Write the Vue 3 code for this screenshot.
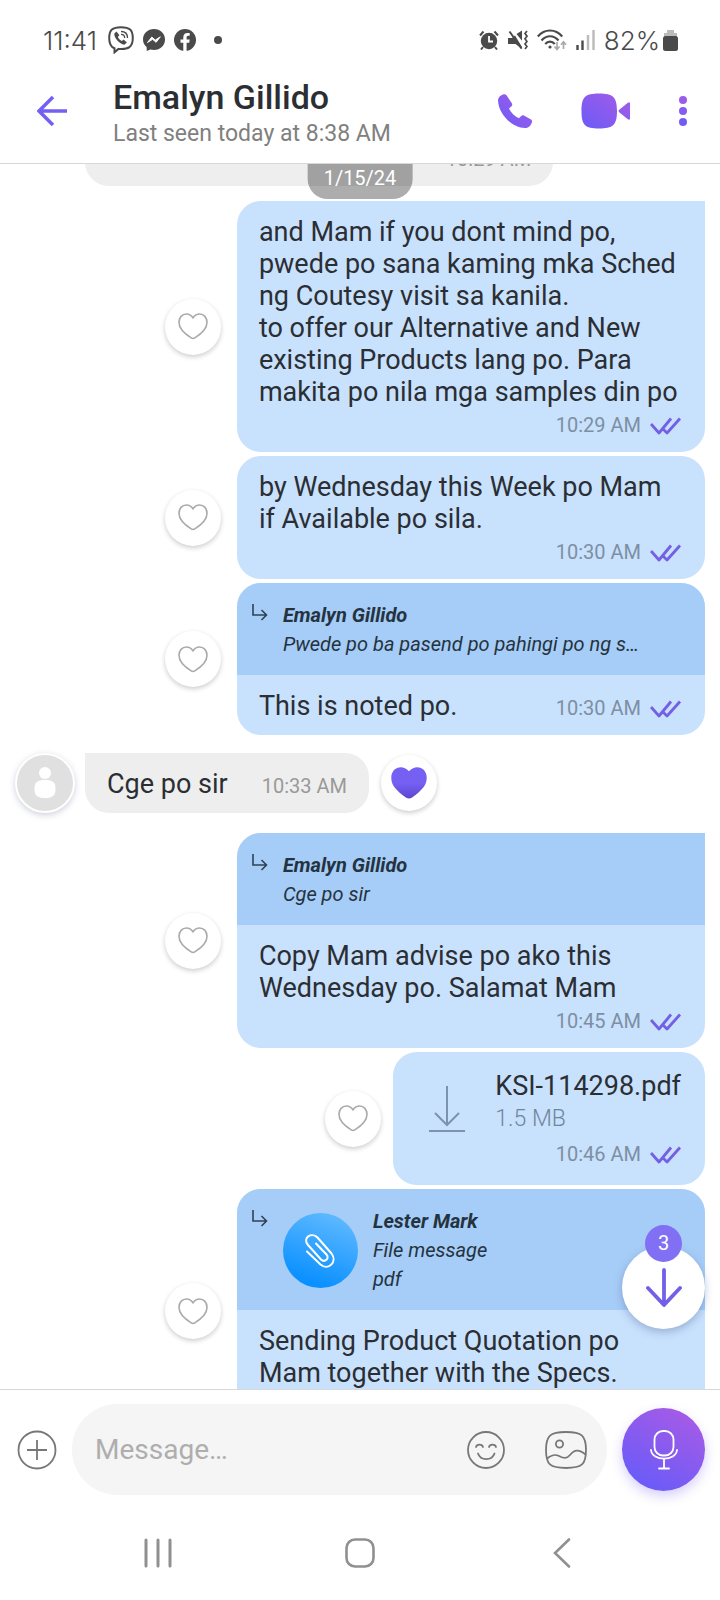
<script setup>
import { ref } from 'vue'

const contact = { name: 'Emalyn Gillido', seen: 'Last seen today at 8:38 AM' }
const draft = ref('')
const unread = ref(3)

const messages = ref([
  { id: 1, mine: false, time: '10:29 AM', text: '', partial: true },
  {
    id: 2,
    mine: true,
    first: true,
    time: '10:29 AM',
    text: 'and Mam if you dont mind po,\npwede po sana kaming mka Sched\nng Coutesy visit sa kanila.\nto offer our Alternative and New\nexisting Products lang po. Para\nmakita po nila mga samples din po'
  },
  {
    id: 3,
    mine: true,
    time: '10:30 AM',
    text: 'by Wednesday this Week po Mam\nif Available po sila.'
  },
  {
    id: 4,
    mine: true,
    inline: true,
    time: '10:30 AM',
    text: 'This is noted po.',
    quote: {
      name: 'Emalyn Gillido',
      lines: ['Pwede po ba pasend po pahingi po ng s…']
    }
  },
  {
    id: 5,
    mine: false,
    first: true,
    inline: true,
    liked: true,
    time: '10:33 AM',
    text: 'Cge po sir'
  },
  {
    id: 6,
    mine: true,
    first: true,
    time: '10:45 AM',
    text: 'Copy Mam advise po ako this\nWednesday po. Salamat Mam',
    quote: { name: 'Emalyn Gillido', lines: ['Cge po sir'] }
  },
  {
    id: 7,
    mine: true,
    time: '10:46 AM',
    file: { name: 'KSI-114298.pdf', size: '1.5 MB' }
  },
  {
    id: 8,
    mine: true,
    time: '10:46 AM',
    text: 'Sending Product Quotation po\nMam together with the Specs.',
    quote: { name: 'Lester Mark', lines: ['File message', 'pdf'], clip: true }
  }
])

const toggleLike = (msg) => {
  msg.liked = !msg.liked
}
</script>

<template>
  <div class="phone">
    <!-- status bar -->
    <div class="status">
      <span class="clock">11:41</span>
      <svg class="st-viber" width="26" height="28" viewBox="0 0 26 28">
        <path
          d="M13 1.2C4.5 1.2 1.2 3.8 1.2 12c0 6 1.6 9 5.3 10.300v4l4-3.400c10 .8 14.300-1.900 14.300-10.900C24.800 3.800 21.500 1.200 13 1.200Z"
          fill="none"
          stroke="#4a4a4a"
          stroke-width="2"
        />
        <path
          d="M8.500 5.500 6.300 7.500c-.4 4.500 5.200 10.500 10 11.200l2.600-2.300-3.300-2.800-1.700 1.400c-1.700-.5-3.700-2.700-4-4.200l1.500-1.500Z"
          fill="#4a4a4a"
        />
        <path
          d="M13 5.500c4 0 6.500 2.500 6.500 6.500M13 8.300c2.200 0 3.700 1.400 3.700 3.700"
          fill="none"
          stroke="#4a4a4a"
          stroke-width="1.3"
        />
      </svg>
      <svg class="st-app" width="22" height="22" viewBox="0 0 22 22">
        <path
          d="M11 0C4.800 0 0 4.500 0 10.500c0 3.100 1.300 5.700 3.600 7.600L3.800 22l3.500-1.500c1.200.3 2.400.5 3.700.5 6.200 0 11-4.500 11-10.500S17.200 0 11 0Z"
          fill="#4a4a4a"
        />
        <path
          d="m4.500 13.500 4.300-5.400 3.500 3 5-3.300-4.200 5.500-3.500-3Z"
          fill="#fff"
          stroke="#fff"
          stroke-linejoin="round"
        />
      </svg>
      <svg class="st-app" width="22" height="22" viewBox="0 0 22 22">
        <circle cx="11" cy="11" r="11" fill="#4a4a4a" />
        <path
          d="M9.300 22v-8.200H6.500v-3.200h2.800V8.200c0-2.800 1.700-4.300 4.200-4.300 1 0 2.200.2 2.200.2v2.700h-1.400c-1.300 0-1.700.8-1.700 1.600v2.200h3.100l-.5 3.200h-2.600V22Z"
          fill="#fff"
        />
      </svg>
      <span class="st-dot"></span>
      <div class="st-right">
        <svg width="20" height="20" viewBox="0 0 20 20">
          <circle cx="10" cy="11" r="8.2" fill="#4a4a4a" />
          <path
            d="m1 5.500 3.500-4M19 5.500l-3.500-4M4 17l-2 2.500M16 17l2 2.500"
            stroke="#4a4a4a"
            stroke-width="2"
          />
          <path
            d="M10 6v5.500h4"
            fill="none"
            stroke="#fff"
            stroke-width="1.8"
          />
        </svg>
        <svg width="20" height="20" viewBox="0 0 20 20">
          <path
            d="M0 8h4l3-2.500 7 11.500v2l-6.500-5H0ZM8.500 4 14 .5v10.300Z"
            fill="#4a4a4a"
          />
          <path d="m1.500 1.500 12 17" stroke="#4a4a4a" stroke-width="2" />
          <path
            d="m19 1-2 2.500 2 2.700-2 2.600 2 2.700-2 2.500 2 2.500-2 2.500"
            fill="none"
            stroke="#4a4a4a"
            stroke-width="1.7"
          />
        </svg>
        <svg width="30" height="22" viewBox="0 0 30 22">
          <g fill="none" stroke="#4a4a4a" stroke-width="2.2">
            <path d="M.8 7.500C7.500-.5 18.500-.5 25.200 7.500" />
            <path d="M4.500 11.500c4.800-5.700 12.200-5.700 17 0" />
            <path d="M8.200 15c2.800-3.200 6.800-3.200 9.600 0" />
          </g>
          <circle cx="13" cy="18" r="1.6" fill="#4a4a4a" />
          <path
            d="M20 13v7m-2.500-2.500L20 20.500l2.500-3M26.500 20v-7m-2.500 2.800 2.500-3 2.500 3"
            fill="none"
            stroke="#aaa"
            stroke-width="1.7"
          />
        </svg>
        <svg width="19" height="20" viewBox="0 0 19 20">
          <path
            d="M1.500 15v5M6.500 10.500V20"
            stroke="#4a4a4a"
            stroke-width="2.4"
          />
          <path d="M12 5v15M17.500 0v20" stroke="#bbb" stroke-width="2.4" />
        </svg>
        <span class="clock">82%</span>
        <svg width="15" height="21" viewBox="0 0 15 21">
          <path d="M4 0h7v3h3v4H1V3h3Z" fill="#bbb" />
          <rect y="6" width="15" height="15" rx="2.5" fill="#4a4a4a" />
        </svg>
      </div>
    </div>

    <!-- chat header -->
    <header class="header">
      <button class="icon-btn" aria-label="Back">
        <svg width="32" height="32" viewBox="0 0 32 32">
          <path
            d="M16 2 2 16l14 14M2 16h28"
            fill="none"
            stroke="#7360f2"
            stroke-width="3.5"
          />
        </svg>
      </button>
      <div class="who">
        <h1>{{ contact.name }}</h1>
        <p>{{ contact.seen }}</p>
      </div>
      <button class="icon-btn call" aria-label="Call">
        <svg width="36" height="36" viewBox="0 0 36 36">
          <defs>
            <linearGradient id="violet" x1="0" y1="1" x2="1" y2="0">
              <stop offset="0" stop-color="#6c5bf8" />
              <stop offset="1" stop-color="#a65be6" />
            </linearGradient>
          </defs>
          <path
            d="M6.500 1.300c-3 1-5.500 3-5.500 6C1.500 21 14.500 34.500 28 35c3.500.2 6-2.500 7-6 .3-1-.1-2-1-2.500l-7-4c-1-.6-2-.4-2.800.5L22 25.200c-4.500-2-8-5.500-10-9.700l2.500-2.300c.8-.8.9-1.800.5-2.800L9.500 2.300c-.6-1-1.800-1.400-3-1Z"
            fill="url(#violet)"
          />
        </svg>
      </button>
      <button class="icon-btn video" aria-label="Video call">
        <svg width="50" height="36" viewBox="0 0 50 36">
          <path
            d="M18 .5C4 .5.500 4 .5 18S4 35.500 18 35.500 36 32 36 18 32 .5 18 .5ZM38.500 16.500l8-6.500c1.500-1.200 2.500-1 2.500 1v14c0 2-1 2.200-2.500 1l-8-6.500c-1.300-1-1.300-2 0-3Z"
            fill="url(#violet)"
          />
        </svg>
      </button>
      <button class="icon-btn" aria-label="More options">
        <svg width="8" height="32" viewBox="0 0 8 32">
          <circle cx="4" cy="5" r="4" fill="#9a5cea" />
          <circle cx="4" cy="16" r="4" fill="#865cf0" />
          <circle cx="4" cy="27" r="4" fill="#735cf6" />
        </svg>
      </button>
    </header>

    <!-- conversation -->
    <main class="chat">
      <div class="list">
        <div
          v-for="msg in messages"
          :key="msg.id"
          class="row"
          :class="{ mine: msg.mine, theirs: !msg.mine, partial: msg.partial }"
        >
          <div v-if="!msg.mine" class="avatar-slot">
            <span v-if="!msg.partial" class="avatar">
              <svg width="22" height="32" viewBox="0 0 22 32">
                <circle cx="11" cy="6" r="6" fill="#fff" />
                <path
                  d="M11 13C3 13 .5 15.500.5 22S3 31 11 31s10.500-2.500 10.500-9S19 13 11 13Z"
                  fill="#fff"
                />
              </svg>
            </span>
          </div>
          <article
            class="bubble"
            :class="{ first: msg.first, wide: msg.text && msg.mine }"
          >
            <div v-if="msg.quote" class="quote">
              <svg class="arrow" width="16" height="18" viewBox="0 0 16 18">
                <path
                  d="M1 0v11h13M9.500 6l5 5-5 5"
                  fill="none"
                  stroke="#2f4255"
                  stroke-width="1.6"
                />
              </svg>
              <span v-if="msg.quote.clip" class="clip">
                <svg width="32" height="36" viewBox="0 0 32 36">
                  <path
                    d="M3 18.500 16.500 31.500C24 38 34 29 27.500 20.500L13.500 4.500C7.500-1.500-2 5 4 12L17 26.500C20.500 30 26 25.500 22.500 21.500L12 10.500"
                    fill="none"
                    stroke="#fff"
                    stroke-width="2"
                    stroke-linecap="round"
                  />
                </svg>
              </span>
              <div class="quote-text">
                <strong>{{ msg.quote.name }}</strong>
                <span v-for="line in msg.quote.lines" :key="line">{{
                  line
                }}</span>
              </div>
            </div>
            <div v-if="msg.file" class="file">
              <svg width="36" height="46" viewBox="0 0 36 46">
                <path
                  d="M18 0v39M6 27l12 12 12-12M0 45h36"
                  fill="none"
                  stroke="#7d93ab"
                  stroke-width="2"
                />
              </svg>
              <div>
                <a href="#" class="file-name">{{ msg.file.name }}</a>
                <span class="file-size">{{ msg.file.size }}</span>
              </div>
            </div>
            <div class="body" :class="{ inline: msg.inline, after: msg.file }">
              <p v-if="msg.text">{{ msg.text }}</p>
              <div class="meta">
                <time>{{ msg.time }}</time>
                <svg v-if="msg.mine" width="33" height="18" viewBox="0 0 33 18">
                  <path
                    d="m1 7 8 9L21 1.500M12.500 11.500l4.500 4.500L30 1.500"
                    fill="none"
                    stroke="#7360e4"
                    stroke-width="2.8"
                    stroke-linejoin="round"
                  />
                </svg>
              </div>
            </div>
          </article>
          <button
            v-if="!msg.partial"
            class="like"
            aria-label="Like"
            @click="toggleLike(msg)"
          >
            <svg v-if="msg.liked" width="36" height="32" viewBox="0.5 0.5 29 25.8">
              <defs>
                <linearGradient id="heart" x1="0" y1="0" x2="0" y2="1">
                  <stop offset="0.5" stop-color="#7660f4" />
                  <stop offset="1" stop-color="#5c46cf" />
                </linearGradient>
              </defs>
              <path
                d="M15 4C13 1.500 10.500.7 8.500.7 4 .7.7 4 .7 9.300.7 15.500 5.500 20 12.500 25c1.700 1.200 3.300 1.200 5 0 7-5 11.800-9.500 11.800-15.700C29.300 4 26 .7 21.500.7c-2 0-4.500.8-6.500 3.300Z"
                fill="url(#heart)"
              />
            </svg>
            <svg v-else width="30" height="27" viewBox="0 0 30 27">
              <path
                d="M15 4.800C13 2 10.500 1 8.500 1 4 1 1 4.500 1 9.500c0 6 4.500 10.500 12.200 15.400 1.300.8 2.300.8 3.600 0C24.500 20 29 15.500 29 9.500 29 4.500 26 1 21.500 1c-2 0-4.500 1-6.500 3.800Z"
                fill="none"
                stroke="#aaa"
                stroke-width="1.6"
              />
            </svg>
          </button>
        </div>
      </div>

      <div class="date">1/15/24</div>

      <button class="to-bottom" aria-label="Scroll to latest">
        <span class="count">{{ unread }}</span>
        <svg width="38" height="40" viewBox="0 0 38 40">
          <path
            d="M19 2v34M3 20l16 17 16-17"
            fill="none"
            stroke="#7360e8"
            stroke-width="3.8"
            stroke-linecap="round"
            stroke-linejoin="round"
          />
        </svg>
      </button>
    </main>

    <!-- composer -->
    <form class="composer" @submit.prevent>
      <button type="button" class="icon-btn" aria-label="Attach">
        <svg width="40" height="40" viewBox="0 0 40 40">
          <g fill="none" stroke="#777" stroke-width="1.8">
            <circle cx="20" cy="20" r="18.5" />
            <path d="M20 10v20M10 20h20" />
          </g>
        </svg>
      </button>
      <div class="field">
        <input
          v-model="draft"
          type="text"
          placeholder="Message…"
          aria-label="Message"
        />
        <button type="button" class="icon-btn" aria-label="Stickers">
          <svg width="38" height="38" viewBox="0 0 38 38">
            <g
              fill="none"
              stroke="#777"
              stroke-width="1.8"
              stroke-linecap="round"
            >
              <circle cx="19" cy="19" r="18" />
              <path
                d="M9 16c.8-3.300 6.200-3.300 7 0M22 16c.8-3.300 6.200-3.300 7 0M11 22.500c2.500 7.500 14 7.500 16.500 0"
              />
            </g>
          </svg>
        </button>
        <button type="button" class="icon-btn" aria-label="Gallery">
          <svg width="42" height="38" viewBox="0 0 42 38">
            <g fill="none" stroke="#777" stroke-width="1.8">
              <path
                d="M21 1C5 1 1 4.500 1 19s4 18 20 18 20-3.500 20-18S37 1 21 1Z"
              />
              <circle cx="14.5" cy="13" r="3.6" />
              <path
                d="M2 27.500c5-4 8-4.500 12-2.500 4.500 2.300 7.500 3.200 11-1 4.500-5.500 9-6 15.500-.5"
              />
            </g>
          </svg>
        </button>
      </div>
      <button type="button" class="mic" aria-label="Record voice message">
        <svg width="28" height="40" viewBox="0 0 28 40">
          <g
            fill="none"
            stroke="#fff"
            stroke-width="1.8"
            stroke-linecap="round"
          >
            <rect x="4.5" y="1" width="19" height="24.5" rx="8.5" />
            <path d="M1 20c1 11.500 25 11.500 26 0M14 29v9M9 38.500h10" />
          </g>
        </svg>
      </button>
    </form>

    <!-- system navigation -->
    <nav class="nav">
      <button class="icon-btn" aria-label="Recents">
        <svg width="28" height="30" viewBox="0 0 28 30">
          <path
            d="M2 2v26M14 2v26M26 2v26"
            stroke="#909090"
            stroke-width="3"
            stroke-linecap="round"
          />
        </svg>
      </button>
      <button class="icon-btn" aria-label="Home">
        <svg width="30" height="30" viewBox="0 0 30 30">
          <rect
            x="1.5"
            y="1.5"
            width="27"
            height="27"
            rx="8.5"
            fill="none"
            stroke="#909090"
            stroke-width="2.6"
          />
        </svg>
      </button>
      <button class="icon-btn" aria-label="Back">
        <svg width="18" height="30" viewBox="0 0 18 30">
          <path
            d="M16 1.500 2 15l14 13.500"
            fill="none"
            stroke="#909090"
            stroke-width="2.6"
            stroke-linecap="round"
          />
        </svg>
      </button>
    </nav>
  </div>
</template>

<style>
body {
  margin: 0;
  background: #fff;
}
</style>

<style scoped>
.phone {
  height: 100vh;
  display: flex;
  flex-direction: column;
  background: #fff;
  color: #2b2e33;
  font-family: Roboto, 'Liberation Sans', sans-serif;
}
svg {
  display: block;
  flex: none;
}
button {
  padding: 0;
  border: none;
  background: none;
  font: inherit;
  cursor: pointer;
}
h1,
p {
  margin: 0;
}

/* status bar */
.status {
  height: 60px;
  padding: 20px 42px 0 43px;
  box-sizing: border-box;
  display: flex;
  align-items: center;
}
.clock {
  font-family: Inter, Roboto, sans-serif;
  font-size: 26px;
  font-weight: 300;
  color: #4a4a4a;
}
.st-viber {
  margin-left: 11px;
}
.st-app {
  margin-left: 9px;
}
.st-dot {
  width: 8px;
  height: 8px;
  margin-left: 18px;
  border-radius: 50%;
  background: #4a4a4a;
}
.st-right {
  margin-left: auto;
  display: flex;
  align-items: center;
  gap: 9px;
}
.st-right .clock + svg {
  margin-left: -6px;
}

/* header */
.header {
  height: 104px;
  padding: 0 33px 2px 37px;
  box-sizing: border-box;
  display: flex;
  align-items: center;
  border-bottom: 1px solid #d8d8d8;
}
.who {
  flex: 1;
  margin-left: 44px;
  padding-top: 4px;
}
.who h1 {
  font-size: 34px;
  line-height: 42px;
  font-weight: 500;
}
.who p {
  font-size: 23px;
  line-height: 32px;
  color: #808080;
}
.video {
  margin: 0 48px;
}

/* conversation */
.chat {
  flex: 1;
  min-height: 0;
  position: relative;
  overflow: hidden;
}
.list {
  display: flex;
  flex-direction: column;
  gap: 4px;
  padding-right: 15px;
}
.row {
  display: flex;
  align-items: center;
}
.mine {
  flex-direction: row-reverse;
}
.theirs {
  margin: 14px 0 16px;
}
.partial {
  margin: -33px 0 11px;
}
.partial .bubble {
  width: 66.4%;
}
.avatar-slot {
  width: 70px;
  margin-left: 15px;
}
.avatar {
  width: 56px;
  height: 56px;
  border: 2px solid #fff;
  border-radius: 50%;
  background: #e0e0e0;
  box-shadow: 0 2px 6px rgba(60, 70, 120, 0.25);
  display: flex;
  align-items: center;
  justify-content: center;
}
.bubble {
  overflow: hidden;
  border-radius: 24px;
  background: #c8e1fd;
}
.wide {
  width: 66.4%;
}
.mine .first {
  border-top-right-radius: 0;
}
.theirs .bubble {
  background: #eee;
}
.theirs .first {
  border-top-left-radius: 0;
}
.body {
  padding: 15px 22px 13px;
}
.body p {
  font-size: 27px;
  line-height: 32px;
  white-space: pre-line;
}
.wide .body p {
  margin-right: -10px;
}
.meta {
  display: flex;
  align-items: center;
  justify-content: flex-end;
  gap: 9px;
  font-size: 20px;
  line-height: 27px;
  color: #7d8fa3;
}
.theirs .meta {
  color: #999;
}
.body p + .meta {
  margin-top: 4px;
}
.inline {
  display: flex;
  align-items: baseline;
  justify-content: space-between;
  gap: 34px;
}
.body.inline p + .meta {
  margin-top: 0;
}
.like {
  flex: none;
  width: 56px;
  height: 56px;
  margin: 0 12px;
  border-radius: 50%;
  background: #fff;
  box-shadow: 0 2px 5px rgba(0, 0, 0, 0.2);
  display: flex;
  align-items: center;
  justify-content: center;
}
.wide + .like {
  margin: 0 16px;
}

/* quoted message */
.quote {
  display: flex;
  align-items: center;
  gap: 15px;
  padding: 18px 22px 16px 15px;
  background: #a6cdf7;
  color: #253340;
}
.arrow {
  align-self: flex-start;
  margin-top: 3px;
}
.quote-text {
  display: flex;
  flex-direction: column;
  font-size: 20px;
  line-height: 29px;
  font-style: italic;
}
.quote-text strong {
  font-weight: 700;
}
.clip {
  width: 75px;
  height: 75px;
  border-radius: 50%;
  background: linear-gradient(200deg, #69beff, #0a90ff 85%);
  display: flex;
  align-items: center;
  justify-content: center;
}

/* file */
.file {
  display: flex;
  align-items: flex-end;
  gap: 30px;
  padding: 18px 24px 0 36px;
}
.file svg {
  margin-bottom: 4px;
}
.file-name,
.file-size {
  display: block;
}
.file-name {
  font-size: 27px;
  line-height: 32px;
  color: inherit;
  text-decoration: none;
}
.file-size {
  font-size: 23px;
  line-height: 34px;
  font-weight: 300;
  color: #71869c;
}
.body.after {
  padding-top: 5px;
  padding-bottom: 17px;
}

/* things floating over the conversation */
.date {
  position: absolute;
  top: 0;
  left: 50%;
  transform: translateX(-50%);
  padding: 2px 16px 9px;
  border-radius: 0 0 20px 20px;
  background: rgba(0, 0, 0, 0.32);
  color: #fff;
  font-size: 20px;
  line-height: 24px;
}
.to-bottom {
  position: absolute;
  right: 15px;
  bottom: 60px;
  width: 83px;
  height: 83px;
  border-radius: 50%;
  background: #fff;
  box-shadow: 0 3px 9px rgba(60, 80, 140, 0.35);
  display: flex;
  align-items: center;
  justify-content: center;
}
.count {
  position: absolute;
  top: -21px;
  left: 23px;
  width: 37px;
  height: 37px;
  border-radius: 50%;
  background: #8270f4;
  color: #fff;
  font-size: 20px;
  line-height: 37px;
}

/* composer */
.composer {
  display: flex;
  align-items: center;
  gap: 15px;
  padding: 14px 15px 10px 17px;
  border-top: 1px solid #d8d8d8;
}
.field {
  flex: 1;
  min-width: 0;
  height: 91px;
  padding: 0 20px 0 23px;
  box-sizing: border-box;
  border-radius: 46px;
  background: #f5f5f5;
  display: flex;
  align-items: center;
  gap: 40px;
}
.field input {
  flex: 1;
  min-width: 0;
  padding: 0;
  border: none;
  outline: none;
  background: none;
  font: inherit;
  font-size: 28px;
  color: inherit;
}
.field input::placeholder {
  color: #aeaeae;
  opacity: 1;
}
.mic {
  width: 83px;
  height: 83px;
  border-radius: 50%;
  background: linear-gradient(30deg, #6c5bf8 15%, #a65be6 90%);
  box-shadow: 0 5px 12px rgba(115, 96, 242, 0.3);
  display: flex;
  align-items: center;
  justify-content: center;
}

/* system navigation */
.nav {
  height: 95px;
  padding: 0 8%;
  display: grid;
  grid-template-columns: repeat(3, 1fr);
  justify-items: center;
  align-items: center;
}
</style>
